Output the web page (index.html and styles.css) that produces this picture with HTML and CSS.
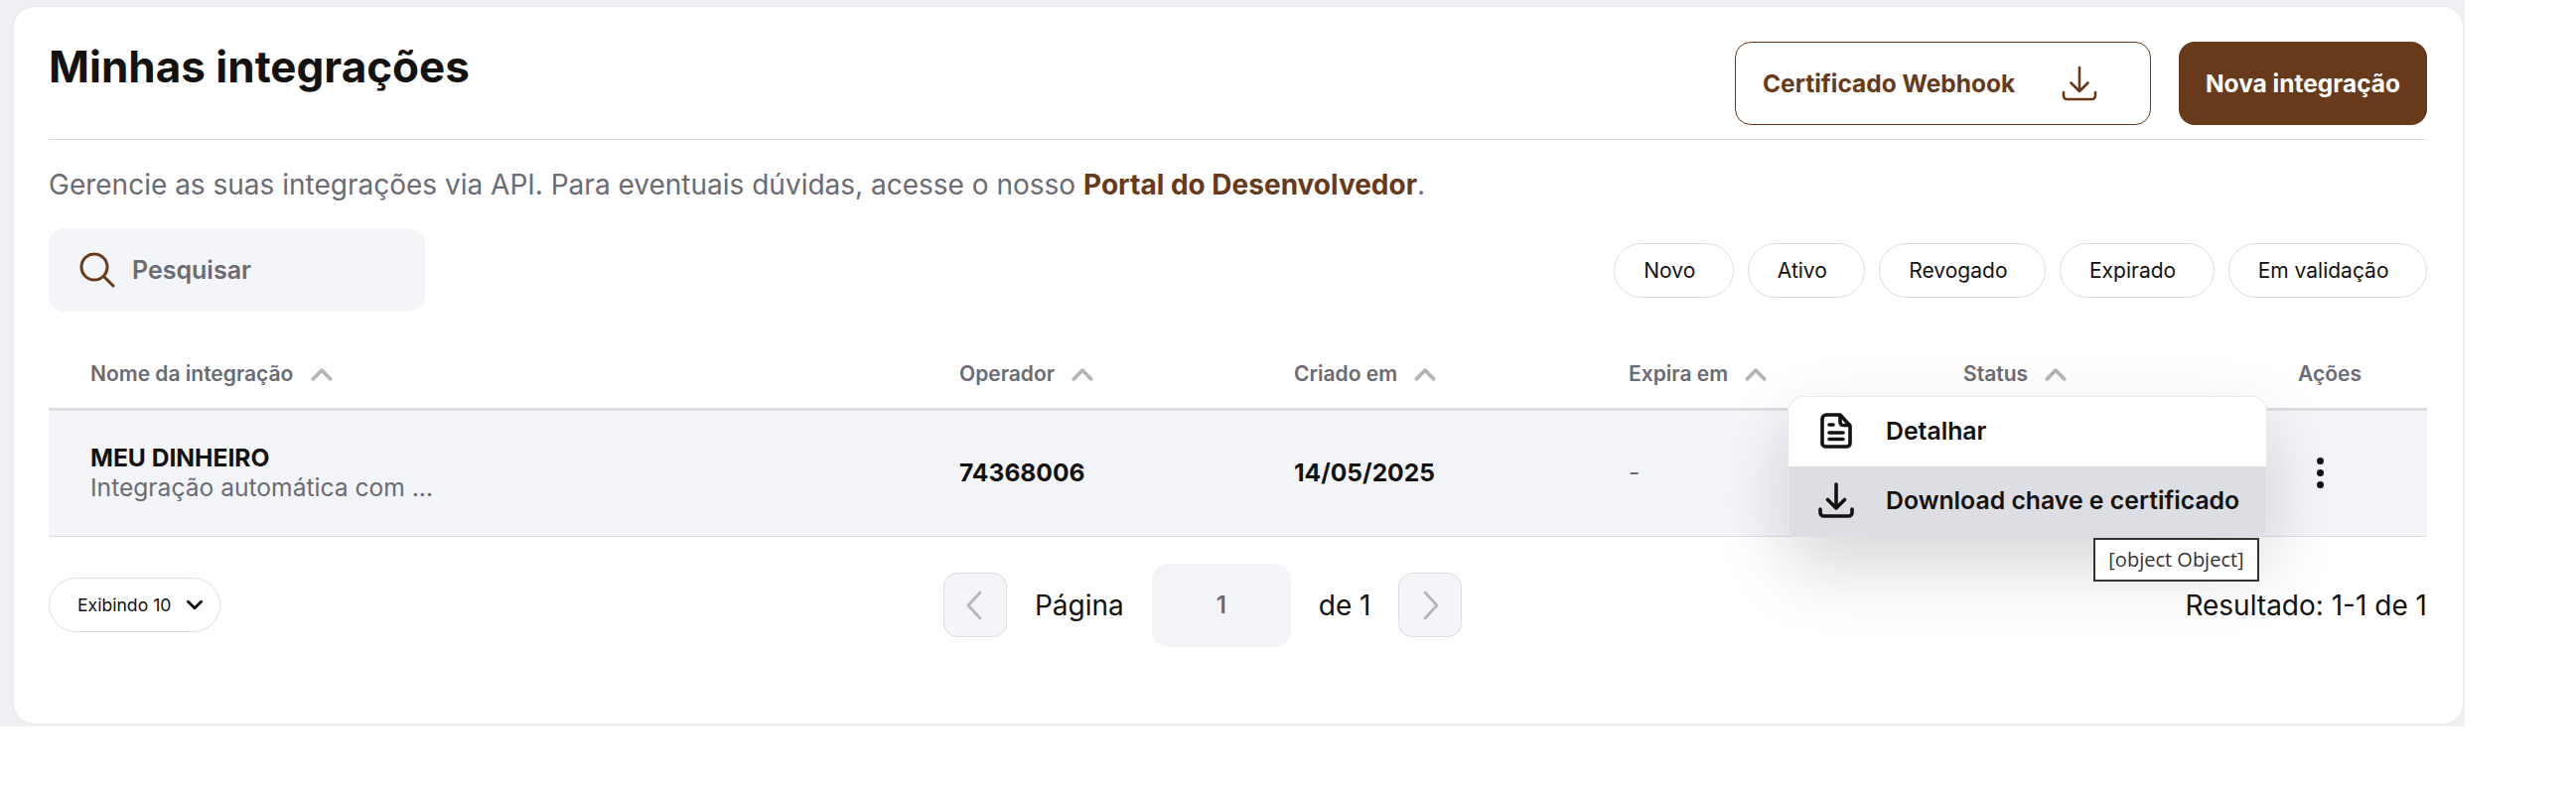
FILE: index.html
```html
<!DOCTYPE html>
<html lang="pt-BR">
  <head>
    <meta charset="UTF-8" />
    <meta name="viewport" content="width=device-width, initial-scale=1.0" />
    <title>Minhas integrações</title>
    <link rel="stylesheet" href="styles.css">
  </head>
  <body>
    <div class="page">
      <main class="card">
        <header class="header">
          <h1>Minhas integrações</h1>
          <div class="header-actions">
            <button type="button" class="btn btn-outline">
              Certificado Webhook
              <svg class="btn-icon" viewBox="0 0 36 36" fill="none" stroke="currentColor" stroke-width="2.6" stroke-linecap="round" stroke-linejoin="round">
                <path d="M18 2v24M9.500 17.500L18 26l8.500-8.500" />
                <path d="M2 27v3.500a3.500 3.500 0 0 0 3.500 3.500h25a3.500 3.500 0 0 0 3.500-3.500V27" />
              </svg>
            </button>
            <button type="button" class="btn btn-solid">Nova integração</button>
          </div>
        </header>

        <p class="intro">Gerencie as suas integrações via API. Para eventuais dúvidas, acesse o nosso <a href="#">Portal do Desenvolvedor</a>.</p>

        <div class="toolbar">
          <label class="search">
            <svg class="search-icon" viewBox="0 0 36 36" fill="none" stroke="currentColor" stroke-width="3" stroke-linecap="round">
              <circle cx="15" cy="15" r="13" />
              <path d="M24.5 24.5L34 34" />
            </svg>
            <input type="text" placeholder="Pesquisar" />
          </label>
          <div class="chips">
            <button type="button" class="chip">Novo</button>
            <button type="button" class="chip">Ativo</button>
            <button type="button" class="chip">Revogado</button>
            <button type="button" class="chip">Expirado</button>
            <button type="button" class="chip">Em validação</button>
          </div>
        </div>

        <table class="table">
          <colgroup>
            <col class="col-name" />
            <col class="col-data" />
            <col class="col-data" />
            <col class="col-data" />
            <col class="col-data" />
            <col />
          </colgroup>
          <thead>
            <tr>
              <th>Nome da integração <svg class="sort" viewBox="0 0 20 12"><path d="M2 10l8-8 8 8" /></svg></th>
              <th>Operador <svg class="sort" viewBox="0 0 20 12"><path d="M2 10l8-8 8 8" /></svg></th>
              <th>Criado em <svg class="sort" viewBox="0 0 20 12"><path d="M2 10l8-8 8 8" /></svg></th>
              <th>Expira em <svg class="sort" viewBox="0 0 20 12"><path d="M2 10l8-8 8 8" /></svg></th>
              <th>Status <svg class="sort" viewBox="0 0 20 12"><path d="M2 10l8-8 8 8" /></svg></th>
              <th>Ações</th>
            </tr>
          </thead>
          <tbody>
            <tr>
              <td>
                <div class="name">MEU DINHEIRO</div>
                <div class="name-sub">Integração automática com ...</div>
              </td>
              <td class="strong">74368006</td>
              <td class="strong">14/05/2025</td>
              <td class="muted">-</td>
              <td></td>
              <td class="actions">
                <button type="button" class="dots" aria-label="Ações">
                  <span></span><span></span><span></span>
                </button>
                <div class="menu">
                  <a href="#" class="menu-item">
                    <svg class="menu-icon" viewBox="0 0 36 36" fill="none" stroke="currentColor" stroke-width="3.6" stroke-linecap="round" stroke-linejoin="round">
                      <path d="M8 2h14l10 11v17.500a3.500 3.500 0 0 1-3.500 3.500h-21A3.500 3.500 0 0 1 4 30.500V6a4 4 0 0 1 4-4z" />
                      <path d="M22 3v6.500a3 3 0 0 0 3 3h6" />
                      <path d="M11 12h4M11 20h14M11 26.500h14" />
                    </svg>
                    Detalhar
                  </a>
                  <a href="#" class="menu-item is-hover">
                    <svg class="menu-icon" viewBox="0 0 36 36" fill="none" stroke="currentColor" stroke-width="3.6" stroke-linecap="round" stroke-linejoin="round">
                      <path d="M18 2v24M9.500 17.500L18 26l8.500-8.500" />
                      <path d="M2 27v3.500a3.500 3.500 0 0 0 3.500 3.500h25a3.500 3.500 0 0 0 3.500-3.500V27" />
                    </svg>
                    Download chave e certificado
                  </a>
                </div>
                <div class="tooltip">[object Object]</div>
              </td>
            </tr>
          </tbody>
        </table>

        <footer class="footer">
          <button type="button" class="page-size">
            Exibindo 10
            <svg viewBox="0 0 16 10" fill="none" stroke="currentColor" stroke-width="2.6" stroke-linecap="round" stroke-linejoin="round"><path d="M2 2l6 6 6-6" /></svg>
          </button>
          <nav class="pager">
            <button type="button" class="pager-btn" aria-label="Anterior">
              <svg viewBox="0 0 20 30" fill="none" stroke="currentColor" stroke-width="2.6" stroke-linecap="round" stroke-linejoin="round"><path d="M15 2L3 15l12 13" /></svg>
            </button>
            <span class="pager-label">Página</span>
            <span class="pager-input">1</span>
            <span class="pager-label">de 1</span>
            <button type="button" class="pager-btn" aria-label="Próxima">
              <svg viewBox="0 0 20 30" fill="none" stroke="currentColor" stroke-width="2.6" stroke-linecap="round" stroke-linejoin="round"><path d="M5 2l12 13L5 28" /></svg>
            </button>
          </nav>
          <div class="result">Resultado: 1-1 de 1</div>
        </footer>
      </main>
    </div>
  </body>
</html>
```

FILE: styles.css
```css
* {
  box-sizing: border-box;
}
body {
  margin: 0;
  background-color: #fff;
  font-family: Inter, "Liberation Sans", sans-serif;
  color: #141210;
}
button {
  font-family: inherit;
  cursor: pointer;
}
.page {
  width: 2482px;
  height: 732px;
  padding: 7px 2px 3px 14px;
  background-color: #eef0f4;
}
.card {
  height: 100%;
  padding: 35px 36px 0 35px;
  background-color: #fff;
  border-radius: 20px;
  box-shadow: 0 0 2px #d6d7de;
}

/* Cabecalho */
.header {
  display: flex;
  justify-content: space-between;
  height: 99px;
  padding-bottom: 14px;
  border-bottom: 1px solid #dddee3;
}
h1 {
  margin: 0;
  font-size: 44px;
  font-weight: 700;
  line-height: 50px;
}
.header-actions {
  display: flex;
  gap: 28px;
}
.btn {
  display: flex;
  align-items: center;
  height: 84px;
  border-radius: 16px;
  font-size: 24.5px;
  font-weight: 700;
}
.btn-outline {
  width: 419px;
  padding: 0 53px 0 27px;
  justify-content: space-between;
  background-color: #fff;
  border: 1.5px solid #673a1b;
  color: #673a1b;
}
.btn-icon {
  width: 36px;
  height: 36px;
}
.btn-solid {
  width: 250px;
  justify-content: center;
  background-color: #673a1b;
  border: none;
  color: #fff;
}
.intro {
  margin: 28px 0 0;
  font-size: 28px;
  line-height: 34px;
  color: #6b6b73;
}
.intro a {
  color: #673a1b;
  font-weight: 700;
  text-decoration: none;
}

/* Busca e filtros */
.toolbar {
  display: flex;
  justify-content: space-between;
  align-items: center;
  margin-top: 27px;
}
.search {
  display: flex;
  align-items: center;
  gap: 17px;
  width: 379px;
  height: 84px;
  padding: 0 31px;
  background-color: #f4f5f9;
  border-radius: 16px;
  color: #673a1b;
}
.search-icon {
  width: 36px;
  height: 36px;
  flex: none;
}
.search input {
  width: 100%;
  padding: 0;
  border: none;
  outline: none;
  background: none;
  font-family: inherit;
  font-size: 25px;
  font-weight: 600;
}
.search input::placeholder {
  color: #6b6b73;
  opacity: 1;
}
.chips {
  display: flex;
  gap: 14px;
}
.chip {
  height: 55px;
  padding: 0 37.5px 0 29px;
  background-color: #fff;
  border: 1px solid #dddee3;
  border-radius: 28px;
  font-size: 21px;
  font-weight: 400;
  color: #141210;
}

/* Tabela */
.table {
  width: 100%;
  margin-top: 15px;
  border-collapse: collapse;
  table-layout: fixed;
}
.col-name {
  width: 917px;
}
.col-data {
  width: 337px;
}
.table th {
  height: 83px;
  padding: 14px 0 0;
  border-bottom: 3px solid #dddee5;
  font-size: 21px;
  font-weight: 600;
  text-align: left;
  color: #6b6b73;
}
.table th:first-child,
.table td:first-child {
  padding-left: 42px;
}
.sort {
  width: 22px;
  height: 13px;
  margin-left: 12px;
  fill: none;
  stroke: #b4b5ba;
  stroke-width: 3.4;
  stroke-linecap: round;
  stroke-linejoin: round;
}
.table td {
  height: 128px;
  padding: 0 0 2px;
  background-color: #f4f5f9;
  border-bottom: 1px solid #dddee3;
}
.name {
  font-size: 24.6px;
  font-weight: 700;
  line-height: 30px;
}
.name-sub {
  font-size: 24.6px;
  line-height: 30px;
  color: #6b6b73;
}
.strong {
  font-size: 24.6px;
  font-weight: 700;
}
.muted {
  font-size: 24.6px;
  color: #6b6b73;
}
.actions {
  position: relative;
}
.dots {
  display: flex;
  flex-direction: column;
  align-items: center;
  gap: 5px;
  width: 44px;
  margin-top: 2px;
  padding: 0;
  background: none;
  border: none;
}
.dots span {
  width: 7px;
  height: 7px;
  background-color: #141210;
  border-radius: 50%;
}

/* Menu de acoes aberto */
.menu {
  position: absolute;
  top: -15px;
  left: -514px;
  width: 483px;
  height: 142px;
  background-color: #fff;
  border: 1px solid #e8e9ed;
  border-bottom: none;
  border-radius: 16px 16px 8px 8px;
  box-shadow: 0 30px 70px rgba(20, 20, 30, 0.17);
  overflow: hidden;
}
.menu-item {
  display: flex;
  align-items: center;
  gap: 32px;
  height: 70px;
  padding: 0 0 2px 30px;
  font-size: 24.8px;
  font-weight: 600;
  color: #141210;
  text-decoration: none;
}
.menu-item.is-hover {
  height: 71px;
}
.menu-icon {
  width: 36px;
  height: 36px;
  flex: none;
}
.is-hover {
  background-color: #dddee3;
}
.tooltip {
  position: absolute;
  top: 128px;
  left: -206px;
  width: 167px;
  height: 44px;
  border: 2px solid #333;
  background-color: #fff;
  font-family: "Open Sans", sans-serif;
  font-size: 20px;
  line-height: 40px;
  text-align: center;
  color: #333;
}

/* Rodape */
.footer {
  display: flex;
  justify-content: space-between;
  align-items: center;
  margin-top: 27px;
}
.page-size {
  display: flex;
  align-items: center;
  gap: 15px;
  width: 173px;
  height: 55px;
  padding: 0 0 0 28px;
  background-color: #fff;
  border: 1px solid #dddee3;
  border-radius: 28px;
  font-size: 17.6px;
  color: #141210;
}
.page-size svg {
  width: 18px;
  height: 11px;
}
.pager {
  display: flex;
  align-items: center;
}
.pager-btn {
  display: flex;
  align-items: center;
  justify-content: center;
  width: 64px;
  height: 65px;
  padding: 0;
  background-color: #f4f5f9;
  border: 1px solid #dddee3;
  border-radius: 14px;
  color: #b4b5ba;
}
.pager-btn svg {
  width: 20px;
  height: 30px;
}
.pager-label {
  margin: 0 28px;
  font-size: 28px;
}
.pager-input {
  width: 140px;
  height: 84px;
  background-color: #f4f5f9;
  border-radius: 16px;
  font-size: 24px;
  font-weight: 600;
  line-height: 84px;
  text-align: center;
  color: #6b6b73;
}
.result {
  font-size: 28px;
}
```
